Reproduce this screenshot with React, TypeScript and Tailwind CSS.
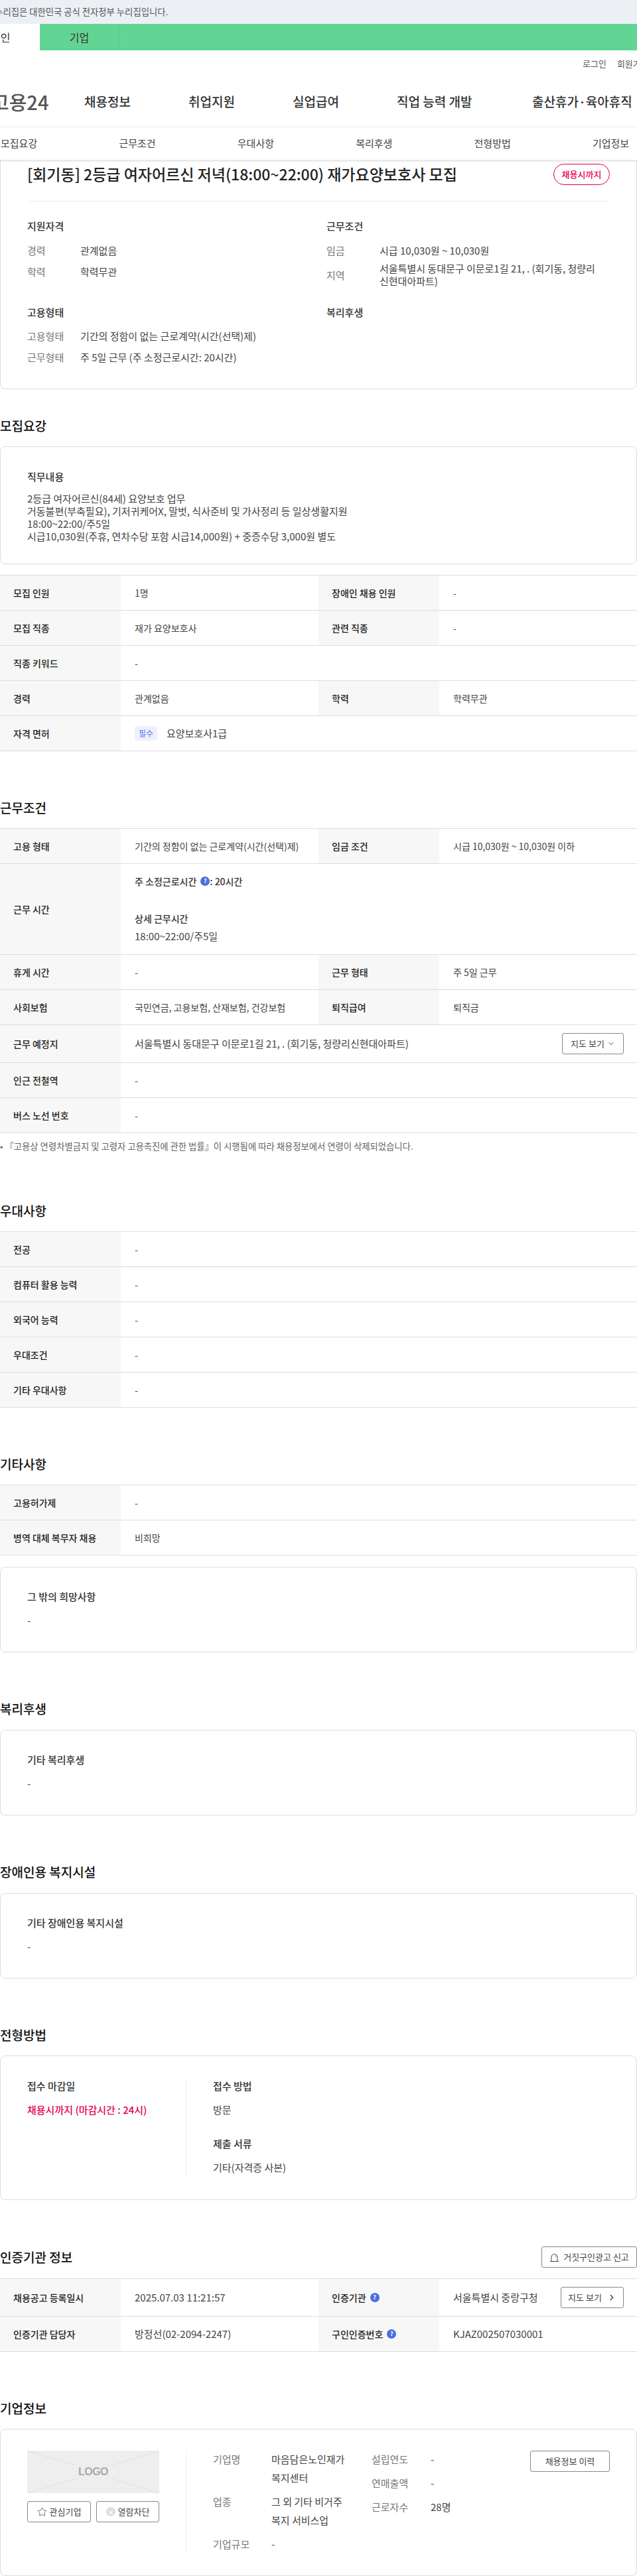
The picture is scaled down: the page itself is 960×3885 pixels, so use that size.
import { ChevronDown, ChevronRight, Star } from 'lucide-react'

const labelCls = 'flex w-[182px] shrink-0 items-center bg-[#f7f7f7] pl-5 text-sm font-medium text-[#222]'
const valueCls = 'flex flex-1 items-center pl-[21px] text-sm text-[#444]'
const btnCls = 'flex items-center justify-center rounded-[3px] border border-[#888] bg-white text-[13px] text-[#444]'

function Help() {
  return (
    <span className="ml-1.5 inline-flex h-3.5 w-3.5 items-center justify-center rounded-full bg-[#4a6ee0] text-[9px] font-bold text-white">
      ?
    </span>
  )
}

// full width table row, label + value
function Row({ label, children }: { label: string; children?: React.ReactNode }) {
  return (
    <div className="flex h-[53px] border-b border-[#ddd]">
      <div className={labelCls}>{label}</div>
      <div className={valueCls}>{children ?? '-'}</div>
    </div>
  )
}

// two column table row
function Row2({ a, av, b, bv }: { a: React.ReactNode; av: React.ReactNode; b: React.ReactNode; bv: React.ReactNode }) {
  return (
    <div className="flex h-[53px] border-b border-[#ddd]">
      <div className={labelCls}>{a}</div>
      <div className="flex w-[298px] shrink-0 items-center pl-[21px] text-sm text-[#444]">{av}</div>
      <div className={labelCls}>{b}</div>
      <div className={valueCls}>{bv}</div>
    </div>
  )
}

function Heading({ children, className = '' }: { children: React.ReactNode; className?: string }) {
  return <h3 className={`text-[19px] leading-7 font-medium text-[#111] ${className}`}>{children}</h3>
}

function Card({ children, className = '' }: { children: React.ReactNode; className?: string }) {
  return <div className={`rounded-lg border border-[#ddd] bg-white ${className}`}>{children}</div>
}

function SimpleCard({ title, className = '' }: { title: string; className?: string }) {
  return (
    <Card className={`h-[129px] px-10 pt-[33px] ${className}`}>
      <p className="text-[15px] leading-[22px] font-medium text-[#333]">{title}</p>
      <p className="mt-[14px] text-[15px] leading-[22px] text-[#444]">-</p>
    </Card>
  )
}

function Info({ k, children }: { k: string; children: React.ReactNode }) {
  return (
    <div className="flex h-8 items-center text-[15px]">
      <span className="w-20 shrink-0 text-[#777]">{k}</span>
      <span className="text-[#444]">{children}</span>
    </div>
  )
}

export default function App() {
  return (
    <div className="h-[3885px] w-[960px] overflow-hidden bg-white font-['Noto_Sans_CJK_KR','Noto_Sans',sans-serif]">
      {/* gov banner */}
      <div className="h-9 overflow-hidden bg-[#ecf0f5]">
        <p className="ml-[-23px] text-[13.33px] leading-9 text-[#555]">이 누리집은 대한민국 공식 전자정부 누리집입니다.</p>
      </div>

      {/* green bar */}
      <div className="flex h-10 bg-[#62d594]">
        <div className="flex w-[60px] items-center justify-start bg-white text-base text-[#333]">
          <span className="ml-[-14px]">개인</span>
        </div>
        <div className="flex w-[120px] items-center justify-center border-r border-[#5bc98a] text-base text-[#333]">기업</div>
      </div>

      {/* util links */}
      <div className="flex h-10 items-center justify-start pl-[878px] text-[13px] whitespace-nowrap text-[#555]">
        <span>로그인</span>
        <span className="ml-4">회원가입</span>
      </div>

      {/* main nav */}
      <div className="flex h-[76px] items-center whitespace-nowrap border-b border-[#eee] text-[19px] font-medium text-[#333]">
        <span className="ml-[-13px] w-[140px] text-[29px] font-medium text-[#555]">고용24</span>
        <span className="w-[157px]">채용정보</span>
        <span className="w-[157px]">취업지원</span>
        <span className="w-[157px]">실업급여</span>
        <span className="w-[204px]">직업 능력 개발</span>
        <span>출산휴가·육아휴직</span>
      </div>

      {/* sub nav */}
      <div className="relative z-10 flex h-[49px] items-center bg-white pl-px text-[15px] whitespace-nowrap text-[#444] shadow-[0_2px_3px_rgba(0,0,0,0.12)]">
        {['모집요강', '근무조건', '우대사항', '복리후생', '전형방법', '기업정보'].map((t) => (
          <span key={t} className="w-[178.4px] shrink-0">
            {t}
          </span>
        ))}
      </div>

      {/* summary */}
      <Card className="-mt-2 h-[354px] px-10 pt-[13px]">
        <div className="flex h-[57px] items-start justify-between border-b border-[#eee]">
          <h2 className="mt-[-3px] text-[23px] leading-9 font-medium whitespace-nowrap text-[#222]">
            [회기동] 2등급 여자어르신 저녁(18:00~22:00) 재가요양보호사 모집
          </h2>
          <span className="flex h-8 w-[85px] items-center justify-center rounded-full border border-[#e6004d] text-[13px] font-medium text-[#e6004d]">
            채용시까지
          </span>
        </div>
        <div className="mt-[25px] grid grid-cols-[451px_1fr]">
          <div>
            <p className="text-[15px] leading-6 font-medium text-[#333]">지원자격</p>
            <div className="mt-[9px]">
              <Info k="경력">관계없음</Info>
              <Info k="학력">학력무관</Info>
            </div>
            <p className="mt-[33px] text-[15px] leading-6 font-medium text-[#333]">고용형태</p>
            <div className="mt-2">
              <Info k="고용형태">기간의 정함이 없는 근로계약(시간(선택)제)</Info>
              <Info k="근무형태">주 5일 근무 (주 소정근로시간: 20시간)</Info>
            </div>
          </div>
          <div>
            <p className="text-[15px] leading-6 font-medium text-[#333]">근무조건</p>
            <div className="mt-[9px]">
              <Info k="임금">시급 10,030원 ~ 10,030원</Info>
              <div className="mt-px flex items-center text-[15px] leading-[19px]">
                <span className="w-20 shrink-0 text-[#777]">지역</span>
                <span className="whitespace-nowrap text-[#444]">
                  서울특별시 동대문구 이문로1길 21, . (회기동, 청량리
                  <br />
                  신현대아파트)
                </span>
              </div>
            </div>
            <p className="mt-[26px] text-[15px] leading-6 font-medium text-[#333]">복리후생</p>
          </div>
        </div>
      </Card>

      {/* 모집요강 */}
      <Heading className="mt-[41px]">모집요강</Heading>
      <Card className="mt-[17px] h-[178px] px-10 pt-[34px]">
        <p className="text-[15px] leading-[22px] font-medium text-[#333]">직무내용</p>
        <div className="mt-[12px] text-[15px] leading-[19px] text-[#444]">
          <p>2등급 여자어르신(84세) 요양보호 업무</p>
          <p>거동불편(부축필요), 기저귀케어X, 말벗, 식사준비 및 가사정리 등 일상생활지원</p>
          <p>18:00~22:00/주5일</p>
          <p>시급10,030원(주휴, 연차수당 포함 시급14,000원) + 중증수당 3,000원 별도</p>
        </div>
      </Card>
      <div className="mt-4 border-t border-[#ddd]">
        <Row2 a="모집 인원" av="1명" b="장애인 채용 인원" bv="-" />
        <Row2 a="모집 직종" av="재가 요양보호사" b="관련 직종" bv="-" />
        <Row label="직종 키워드" />
        <Row2 a="경력" av="관계없음" b="학력" bv="학력무관" />
        <Row label="자격 면허">
          <span className="mr-3.5 flex h-[22px] w-[34px] items-center justify-center rounded-[3px] bg-[#eef1fd] text-xs text-[#5b74e8]">필수</span>
          <span className="text-[15px]">요양보호사1급</span>
        </Row>
      </div>

      {/* 근무조건 */}
      <Heading className="mt-[71px]">근무조건</Heading>
      <div className="mt-[17px] border-t border-[#ddd]">
        <Row2 a="고용 형태" av="기간의 정함이 없는 근로계약(시간(선택)제)" b="임금 조건" bv="시급 10,030원 ~ 10,030원 이하" />
        <div className="flex h-[137px] border-b border-[#ddd]">
          <div className={labelCls}>근무 시간</div>
          <div className="flex-1 pt-[15px] pl-[21px] text-sm text-[#333]">
            <p className="flex h-[22px] items-center whitespace-pre font-medium">
              주 소정근로시간<Help />: 20시간
            </p>
            <p className="mt-[34px] leading-[22px] font-medium">상세 근무시간</p>
            <p className="mt-[5px] text-[15px] leading-[22px] text-[#444]">18:00~22:00/주5일</p>
          </div>
        </div>
        <Row2 a="휴게 시간" av="-" b="근무 형태" bv="주 5일 근무" />
        <Row2 a="사회보험" av="국민연금, 고용보험, 산재보험, 건강보험" b="퇴직급여" bv="퇴직금" />
        <div className="flex h-[57px] border-b border-[#ddd]">
          <div className={labelCls}>근무 예정지</div>
          <div className="flex flex-1 items-center justify-between pr-5 pl-[21px] text-[15px] text-[#444]">
            서울특별시 동대문구 이문로1길 21, . (회기동, 청량리신현대아파트)
            <button className={`${btnCls} h-8 w-[93px] gap-1`}>
              지도 보기 <ChevronDown size={12} />
            </button>
          </div>
        </div>
        <Row label="인근 전철역" />
        <Row label="버스 노선 번호" />
      </div>
      <p className="mt-2.5 text-[13.33px] leading-5 text-[#666]">• 『고용상 연령차별금지 및 고령자 고용촉진에 관한 법률』이 시행됨에 따라 채용정보에서 연령이 삭제되었습니다.</p>

      {/* 우대사항 */}
      <Heading className="mt-[73px]">우대사항</Heading>
      <div className="mt-[17px] border-t border-[#ddd]">
        <Row label="전공" />
        <Row label="컴퓨터 활용 능력" />
        <Row label="외국어 능력" />
        <Row label="우대조건" />
        <Row label="기타 우대사항" />
      </div>

      {/* 기타사항 */}
      <Heading className="mt-[71px]">기타사항</Heading>
      <div className="mt-[17px] border-t border-[#ddd]">
        <Row label="고용허가제" />
        <Row label="병역 대체 복무자 채용">비희망</Row>
      </div>
      <SimpleCard title="그 밖의 희망사항" className="mt-[17px]" />

      {/* 복리후생 */}
      <Heading className="mt-[71px]">복리후생</Heading>
      <SimpleCard title="기타 복리후생" className="mt-[18px]" />

      {/* 장애인용 복지시설 */}
      <Heading className="mt-[71px]">장애인용 복지시설</Heading>
      <SimpleCard title="기타 장애인용 복지시설" className="mt-[18px]" />

      {/* 전형방법 */}
      <Heading className="mt-[71px]">전형방법</Heading>
      <Card className="mt-[17px] flex h-[218px] px-10 pt-8">
        <div className="h-[152px] w-[240px] border-r border-[#eee] pt-0.5">
          <p className="text-[15px] leading-[22px] font-medium text-[#333]">접수 마감일</p>
          <p className="mt-3.5 text-[15px] leading-[22px] font-medium text-[#e6004d]">채용시까지 (마감시간 : 24시)</p>
        </div>
        <div className="pt-0.5 pl-10">
          <p className="text-[15px] leading-[22px] font-medium text-[#333]">접수 방법</p>
          <p className="mt-3.5 text-[15px] leading-[22px] text-[#444]">방문</p>
          <p className="mt-[29px] text-[15px] leading-[22px] font-medium text-[#333]">제출 서류</p>
          <p className="mt-3.5 text-[15px] leading-[22px] text-[#444]">기타(자격증 사본)</p>
        </div>
      </Card>

      {/* 인증기관 정보 */}
      <div className="mt-[70px] flex h-8 items-center justify-between">
        <Heading>인증기관 정보</Heading>
        <button className={`${btnCls} h-8 w-[144px] gap-1.5`}>
          <svg width="15" height="13" viewBox="0 0 15 13" fill="none" stroke="#444" strokeWidth="1">
            <path d="M3 12V6a4.5 4.5 0 0 1 9 0v6" />
            <path d="M1 12.5h13" />
            <path d="M9 3.5a2.5 2.5 0 0 1 1 2" />
          </svg>
          거짓구인광고 신고
        </button>
      </div>
      <div className="mt-4 border-t border-[#ddd]">
        <div className="flex h-[57px] border-b border-[#ddd]">
          <div className={labelCls}>채용공고 등록일시</div>
          <div className="flex w-[298px] shrink-0 items-center pl-[21px] text-[15px] text-[#444]">2025.07.03 11:21:57</div>
          <div className={labelCls}>
            인증기관
            <Help />
          </div>
          <div className="flex flex-1 items-center justify-between pr-5 pl-[21px] text-[15px] text-[#444]">
            서울특별시 중랑구청
            <button className={`${btnCls} h-8 w-[95px] gap-2`}>
              지도 보기 <ChevronRight size={14} strokeWidth={2.5} />
            </button>
          </div>
        </div>
        <Row2
          a="인증기관 담당자"
          av={<span className="text-[15px]">방정선(02-2094-2247)</span>}
          b={
            <>
              구인인증번호
              <Help />
            </>
          }
          bv={<span className="text-[15px]">KJAZ002507030001</span>}
        />
      </div>

      {/* 기업정보 */}
      <Heading className="mt-[71px]">기업정보</Heading>
      <Card className="mt-[17px] flex h-[222px] px-10 pt-8">
        <div className="w-[199px] shrink-0">
          <div className="relative flex h-16 items-center justify-center bg-[#eeeeee]">
            <svg className="absolute inset-0 h-full w-full" viewBox="0 0 199 64" stroke="#e0e0e0" strokeWidth="1">
              <path d="M0 0 L72 22 M127 42 L199 64 M199 0 L127 22 M72 42 L0 64" />
            </svg>
            <span className="font-['Liberation_Sans',sans-serif] text-base font-bold tracking-[-0.5px] text-[#aaa]">LOGO</span>
          </div>
          <div className="mt-3 flex justify-between">
            <button className={`${btnCls} h-8 w-[96px] gap-1`}>
              <Star size={15} strokeWidth={1.2} /> 관심기업
            </button>
            <button className={`${btnCls} h-8 w-[95px] gap-1`}>
              <span className="flex h-[14px] w-[14px] items-center justify-center rounded-full bg-[#ddd] text-[10px] text-white">✕</span> 열람차단
            </button>
          </div>
        </div>
        <div className="ml-10 h-[155px] w-px bg-[#eee]"></div>
        <div className="-mt-px w-[279px] pl-10 text-[15px] leading-7 text-[#444]">
          <div className="flex">
            <span className="w-[88px] shrink-0 text-[#777]">기업명</span>
            <span className="w-[115px]">마음담은노인재가복지센터</span>
          </div>
          <div className="mt-2 flex">
            <span className="w-[88px] shrink-0 text-[#777]">업종</span>
            <span className="w-[115px]">그 외 기타 비거주 복지 서비스업</span>
          </div>
          <div className="mt-2 flex">
            <span className="w-[88px] shrink-0 text-[#777]">기업규모</span>
            <span>-</span>
          </div>
        </div>
        <div className="-mt-px w-[239px] text-[15px] leading-7 text-[#444]">
          <div className="flex">
            <span className="w-[89px] shrink-0 text-[#777]">설립연도</span>-
          </div>
          <div className="mt-2 flex">
            <span className="w-[89px] shrink-0 text-[#777]">연매출액</span>-
          </div>
          <div className="mt-2 flex">
            <span className="w-[89px] shrink-0 text-[#777]">근로자수</span>28명
          </div>
        </div>
        <button className={`${btnCls} h-8 w-[120px] text-sm`}>채용정보 이력</button>
      </Card>
    </div>
  )
}
